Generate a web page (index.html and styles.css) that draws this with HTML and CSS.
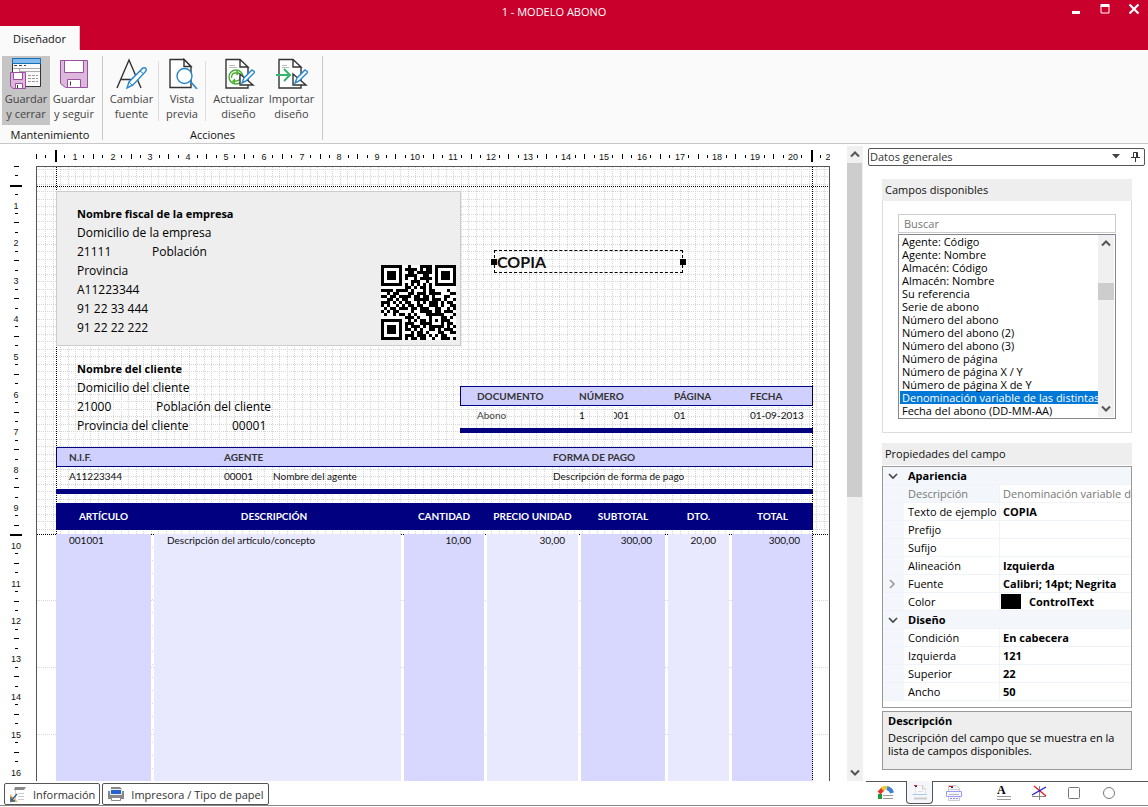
FILE: index.html
```html
<!DOCTYPE html>
<html lang="es">
<head>
<meta charset="utf-8">
<title>1 - MODELO ABONO</title>
<link rel="stylesheet" href="styles.css">
</head>
<body>
<div class="window">
  <header class="titlebar">
    <h1 class="title">1 - MODELO ABONO</h1>
    <div class="window-controls">
      <button class="window-button" type="button" aria-label="Minimizar"><svg width="12" height="12" viewBox="0 0 12 12"><path d="M2 9.500h8" stroke="#fff" stroke-width="3"/></svg></button>
      <button class="window-button" type="button" aria-label="Maximizar"><svg width="12" height="12" viewBox="0 0 12 12"><path d="M2 3h8v7h-8z" fill="none" stroke="#fff"/><path d="M1.500 2.500h9" stroke="#fff" stroke-width="3"/></svg></button>
      <button class="window-button" type="button" aria-label="Cerrar"><svg width="12" height="12" viewBox="0 0 12 12"><path d="M1.500 1.500l9 9M10.500 1.500l-9 9" stroke="#fff" stroke-width="2.200"/></svg></button>
    </div>
  </header>
  <nav class="tabs"><button class="tab" type="button">Diseñador</button></nav>

  <section class="ribbon">
    <div class="ribbon-group">
      <div class="ribbon-tools">
        <button class="tool tool-active" type="button">
          <svg width="32" height="32" viewBox="0 0 32 32"><path d="M2.500 1.500h28v28h-28z" fill="#fafafa" stroke="#333"/><path d="M2.500 1.500h28v5h-28z" fill="#83bcec" stroke="#1570b8"/><path d="M4 8.500h3m2 0h3m2 0h2" stroke="#444"/><path d="M3 11.500h27M9.500 11v6M9 14.500h21" stroke="#aaa"/><path d="M18 18.500h10M18 21.500h10M18 24.500h10" stroke="#999" stroke-dasharray="3 1"/><path d="M.500 15.500h15v16H3l-2.500-2.500z" fill="#dcb8dc" stroke="#9b4f9f"/><path d="M3.500 15.500h9v7h-9z" fill="#fff" stroke="#9b4f9f"/><path d="M5.500 26.500h7v5h-7z" fill="#fff" stroke="#9b4f9f"/><path d="M7.500 28v3" stroke="#333"/></svg>
          <span>Guardar<br>y cerrar</span></button>
        <button class="tool" type="button">
          <svg width="32" height="32" viewBox="0 0 32 32"><path d="M2.500 3.500h27v27h-22l-5-4z" fill="#dcb8dc" stroke="#9b4f9f"/><path d="M6.500 3.500h19v12h-19zM9.500 22.500h13v8h-13z" fill="#fff" stroke="#9b4f9f"/><path d="M12.500 24.500v4" stroke="#333"/></svg>
          <span>Guardar<br>y seguir</span></button>
      </div>
      <div class="ribbon-label">Mantenimiento</div>
    </div>
    <div class="ribbon-group ribbon-actions">
      <div class="ribbon-tools">
        <button class="tool tool-wide" type="button">
          <svg width="32" height="32" viewBox="0 0 32 32"><path d="M1 31l12-28 12 28M5 22.500h16" fill="none" stroke="#333" stroke-width="1.400"/><path d="M11 31l2-6 14-14q4-1 3 3L17 28z" fill="#fff" stroke="#2587cf" stroke-width="1.400"/><path d="M13 25l3 3M24 14l4 3" stroke="#2587cf"/></svg>
          <span>Cambiar<br>fuente</span></button>
        <i class="tool-divider"></i>
        <button class="tool tool-narrow" type="button">
          <svg width="32" height="32" viewBox="0 0 32 32"><path d="M4 2.500h14l7 7v21H4z" fill="#fff" stroke="#333" stroke-width="1.400"/><path d="M18 2.500v7h7z" fill="#fff" stroke="#333" stroke-width="1.400"/><circle cx="18.500" cy="19" r="7.500" fill="#fff" stroke="#2587cf" stroke-width="1.400"/><path d="M24 24l7 8" stroke="#2587cf" stroke-width="1.600"/></svg>
          <span>Vista<br>previa</span></button>
        <i class="tool-divider"></i>
        <div class="tool-pair">
        <button class="tool tool-wide" type="button">
          <svg width="32" height="32" viewBox="0 0 32 32"><path d="M25 10v21H3V2.500h14l8 7.500h-8V2.500" fill="#fff" stroke="#333" stroke-width="1.400"/><path d="M6 8.500h6M6 10.500h8" stroke="#bbb"/><g fill="none" stroke="#4aae32"><circle cx="13" cy="20" r="7" stroke-width="1.500"/><path d="M8.500 21q0-5 4-5h3l-2-2m2 2-2 2M17 19q1 5-4 5h-3l2-2m-2 2 2 2" stroke-width="1.300"/></g><path d="M17 17v11h13z" fill="#fff" stroke="#333" stroke-width="1.400"/><path d="M19 26l2-5 8-8 3 2-9 9z" fill="#fff" stroke="#2587cf" stroke-width="1.400"/></svg>
          <span>Actualizar<br>diseño</span></button>
        <button class="tool tool-wide" type="button">
          <svg width="32" height="32" viewBox="0 0 32 32"><path d="M25 10v21H3V2.500h14l8 7.500h-8V2.500" fill="#fff" stroke="#333" stroke-width="1.400"/><path d="M6 8.500h5M6 10.500h7" stroke="#bbb"/><path d="M0 18h13M8 12l6 6-6 6" fill="none" stroke="#36b56c" stroke-width="2"/><path d="M17 17v11h13z" fill="#fff" stroke="#333" stroke-width="1.400"/><path d="M19 26l2-5 8-8 3 2-9 9z" fill="#fff" stroke="#2587cf" stroke-width="1.400"/></svg>
          <span>Importar<br>diseño</span></button>
        </div>
      </div>
      <div class="ribbon-label">Acciones</div>
    </div>
  </section>

  <main class="workspace">
    <section class="designer">
      <svg class="ruler ruler-top" id="ruler-top"></svg>
      <svg class="ruler ruler-left" id="ruler-left"></svg>
      <div class="page" id="page">
        <svg class="page-grid" id="page-grid"></svg>

        <div class="company">
          <strong>Nombre fiscal de la empresa</strong>
          <span>Domicilio de la empresa</span>
          <span class="pair"><span class="postcode">21111</span><span>Población</span></span>
          <span>Provincia</span>
          <span>A11223344</span>
          <span>91 22 33 444</span>
          <span>91 22 22 222</span>
          <svg class="qr" id="qr" viewBox="0 0 25 25" shape-rendering="crispEdges" role="img" aria-label="Código QR"></svg>
        </div>

        <div class="customer">
          <strong>Nombre del cliente</strong>
          <span>Domicilio del cliente</span>
          <span class="pair"><span class="postcode-wide">21000</span><span>Población del cliente</span></span>
          <span class="pair"><span class="province">Provincia del cliente</span><span>00001</span></span>
        </div>

        <div class="selected-field">COPIA</div>

        <table class="info document">
          <colgroup><col class="w-type"><col class="w-series"><col class="w-number"><col class="w-page"><col></colgroup>
          <thead><tr><th>DOCUMENTO</th><th colspan="2">NÚMERO</th><th>PÁGINA</th><th>FECHA</th></tr></thead>
          <tbody><tr><td class="muted">Abono</td><td>1</td><td><span class="cut">001</span></td><td>01</td><td>01-09-2013</td></tr></tbody>
        </table>

        <table class="info payment">
          <colgroup><col class="w-nif"><col class="w-agent-code"><col class="w-agent-name"><col></colgroup>
          <thead><tr><th>N.I.F.</th><th colspan="2">AGENTE</th><th>FORMA DE PAGO</th></tr></thead>
          <tbody><tr><td>A11223344</td><td>00001</td><td>Nombre del agente</td><td>Descripción de forma de pago</td></tr></tbody>
        </table>

        <div class="lines">
          <div class="lines-head"><span>ARTÍCULO</span><span class="head-description">DESCRIPCIÓN</span><span>CANTIDAD</span><span>PRECIO UNIDAD</span><span>SUBTOTAL</span><span>DTO.</span><span>TOTAL</span></div>
          <div class="lines-body"><span class="text">001001</span><span class="text">Descripción del artículo/concepto</span><span>10,00</span><span>30,00</span><span>300,00</span><span>20,00</span><span>300,00</span></div>
        </div>
        <i class="guide guide-right"></i>
      </div>
      <div class="scrollbar main-scroll">
        <svg width="16" height="17" viewBox="0 0 16 17"><path d="M4 10.500l4-4 4 4" fill="none" stroke="#555" stroke-width="2"/></svg>
        <i class="main-thumb"></i>
        <svg class="scroll-end" width="16" height="17" viewBox="0 0 16 17"><path d="M4 6.500l4 4 4-4" fill="none" stroke="#555" stroke-width="2"/></svg>
      </div>
    </section>

    <aside class="side">
      <div class="side-content">
        <div class="pane-title"><span>Datos generales</span>
          <button class="pane-button" type="button" aria-label="Opciones"><svg width="8" height="5" viewBox="0 0 8 5"><path d="M0 0h8l-4 4.500z" fill="#444"/></svg></button>
          <button class="pane-button" type="button" aria-label="Fijar"><svg width="9" height="10" viewBox="0 0 9 10"><path d="M2.500 5.500v-5h4v5M5.500.500v5M0 5.500h9M4.500 6v4" fill="none" stroke="#333"/></svg></button>
        </div>
        <section class="box">
          <h2 class="box-title">Campos disponibles</h2>
          <div class="box-body">
            <input class="search" type="text" placeholder="Buscar" aria-label="Buscar">
            <div class="list">
              <ul class="list-items" role="listbox" aria-label="Campos disponibles">
                <li role="option">Agente: Código</li><li role="option">Agente: Nombre</li><li role="option">Almacén: Código</li><li role="option">Almacén: Nombre</li><li role="option">Su referencia</li><li role="option">Serie de abono</li><li role="option">Número del abono</li><li role="option">Número del abono (2)</li><li role="option">Número del abono (3)</li><li role="option">Número de página</li><li role="option">Número de página X / Y</li><li role="option">Número de página X de Y</li><li role="option" aria-selected="true" class="chosen">Denominación variable de las distintas</li><li role="option">Fecha del abono (DD-MM-AA)</li>
              </ul>
              <div class="scrollbar list-scroll">
                <svg width="16" height="17" viewBox="0 0 16 17"><path d="M4 10.500l4-4 4 4" fill="none" stroke="#555" stroke-width="2"/></svg>
                <i class="list-thumb"></i>
                <svg class="scroll-end" width="16" height="17" viewBox="0 0 16 17"><path d="M4 6.500l4 4 4-4" fill="none" stroke="#555" stroke-width="2"/></svg>
              </div>
            </div>
          </div>
        </section>
        <section class="box-plain">
          <h2 class="box-title">Propiedades del campo</h2>
          <div class="props-frame">
          <table class="props">
            <colgroup><col class="w-toggle"><col class="w-name"><col></colgroup>
            <tr class="category"><td><svg width="10" height="8" viewBox="0 0 10 8"><path d="M1 2l4 4 4-4" fill="none" stroke="#444" stroke-width="1.600"/></svg></td><th colspan="2">Apariencia</th></tr>
            <tr class="readonly"><td></td><th>Descripción</th><td>Denominación variable de</td></tr>
            <tr><td></td><th>Texto de ejemplo</th><td>COPIA</td></tr>
            <tr><td></td><th>Prefijo</th><td></td></tr>
            <tr><td></td><th>Sufijo</th><td></td></tr>
            <tr><td></td><th>Alineación</th><td>Izquierda</td></tr>
            <tr><td><svg width="8" height="10" viewBox="0 0 8 10"><path d="M2 1l4 4-4 4" fill="none" stroke="#999" stroke-width="1.600"/></svg></td><th>Fuente</th><td>Calibri; 14pt; Negrita</td></tr>
            <tr><td></td><th>Color</th><td><span class="color-value"><i class="swatch"></i>ControlText</span></td></tr>
            <tr class="category"><td><svg width="10" height="8" viewBox="0 0 10 8"><path d="M1 2l4 4 4-4" fill="none" stroke="#444" stroke-width="1.600"/></svg></td><th colspan="2">Diseño</th></tr>
            <tr><td></td><th>Condición</th><td>En cabecera</td></tr>
            <tr><td></td><th>Izquierda</th><td>121</td></tr>
            <tr><td></td><th>Superior</th><td>22</td></tr>
            <tr><td></td><th>Ancho</th><td>50</td></tr>
          </table>
          </div>
          <div class="help"><strong>Descripción</strong><p>Descripción del campo que se muestra en la lista de campos disponibles.</p></div>
        </section>
      </div>
    </aside>
  </main>

  <footer class="bottom">
    <div class="bottom-tabs">
      <button class="bottom-tab" type="button"><svg width="18" height="18" viewBox="0 0 18 18"><path d="M6 2h11l-2 3H5z" fill="#888"/><path d="M6.500 5v10" fill="none" stroke="#ccc"/><path d="M9 8.500h6M9 11.500h6M9 14.500h6" stroke="#ccc"/><path d="M1 9v8h8z" fill="#efb651"/><path d="M8 9l-6 7v-4m0 4h4" fill="none" stroke="#285b9b" stroke-width="1.300"/></svg>Información</button>
      <button class="bottom-tab" type="button"><svg width="18" height="18" viewBox="0 0 18 18"><path d="M4 2h9l2 2v3H4z" fill="#888"/><path d="M1 6h16v8H1z" fill="#888"/><path d="M3.500 4.500h11v5h-11z" fill="#2563d0" stroke="#eee"/><path d="M4.500 12.500h9v3h-9z" fill="#fff" stroke="#888"/></svg>Impresora / Tipo de papel</button>
    </div>
    <div class="side-tabs">
      <button class="side-tab" type="button" aria-label="Datos generales"><svg width="18" height="16" viewBox="0 0 18 16"><path d="M3 14V9" stroke="#20983c" stroke-width="4"/><path d="M2 8l4-4" stroke="#e03b20" stroke-width="4"/><path d="M5 4q3-2 5-1" fill="none" stroke="#f1c832" stroke-width="4"/><path d="M10 3q4 1 5 5" fill="none" stroke="#3b83d8" stroke-width="4"/><path d="M6 10.500h10M6 13.500h10" stroke="#999"/></svg></button>
      <button class="side-tab side-tab-active" type="button" aria-label="Cabecera"><svg width="18" height="18" viewBox="0 0 18 18"><path d="M4.500 12V2.500h7l3 3V12" fill="#f9f9f9" stroke="#e4e4e4"/><path d="M11.500 2v4h3" fill="none" stroke="#ccc"/><path d="M3 2.500h3" stroke="#d22"/><path d="M4 3.500h2" stroke="#22b"/><path d="M7 8.500h5" stroke="#ddd"/><path d="M1.500 11.500h14" stroke="#a5c9ef"/><path d="M3 15.500h13" stroke="#ccc" stroke-width="2"/></svg></button>
      <button class="side-tab" type="button" aria-label="Líneas"><svg width="18" height="18" viewBox="0 0 18 18"><path d="M3.500 16.500v-15h8l3 3v12z" fill="#f9f9f9" stroke="#ccc"/><path d="M4 2.500h4" stroke="#d22"/><path d="M6 3.500h2" stroke="#22b"/><path d="M4 5.500h10" stroke="#ccc"/><path d="M1.500 7.500h15v5h-15z" fill="#f6f6ff" stroke="#9b9bf5"/><path d="M4 10.500h10" stroke="#bbb"/><path d="M5 14.500h9" stroke="#88e" stroke-dasharray="2 1"/></svg></button>
      <i></i>
      <button class="side-tab" type="button" aria-label="Texto"><svg width="18" height="18" viewBox="0 0 18 18"><text x="2" y="10" class="letter-icon">A</text><path d="M2 12.500h14M2 15.500h14" stroke="#999"/></svg></button>
      <button class="side-tab" type="button" aria-label="Línea"><svg width="18" height="18" viewBox="0 0 18 18"><path d="M9.500 2v14M2 12.500h14" stroke="#888"/><path d="M4 2l12 10" stroke="#d22" stroke-width="1.400"/><path d="M16 3L2 11" stroke="#22d" stroke-width="1.400"/></svg></button>
      <button class="side-tab" type="button" aria-label="Rectángulo"><svg width="18" height="18" viewBox="0 0 18 18"><rect x="3.500" y="3.500" width="11" height="11" rx="1" fill="none" stroke="#777"/></svg></button>
      <button class="side-tab" type="button" aria-label="Elipse"><svg width="18" height="18" viewBox="0 0 18 18"><circle cx="9" cy="9" r="5.500" fill="none" stroke="#777"/></svg></button>
    </div>
  </footer>
</div>
<script src="script.js"></script>
</body>
</html>
```

FILE: styles.css
```css
* { box-sizing: border-box; }
body, h1, h2, p, ul { margin: 0; padding: 0; }
body { font-family: "Open Sans", "Noto Sans", sans-serif; font-size: 11px; color: #111; background: #fff; }
button { font: inherit; color: inherit; background: none; border: 0; padding: 0; margin: 0; }
svg { display: block; flex: none; }
h1, h2 { font-weight: 400; }

.window { display: flex; flex-direction: column; height: 100vh; overflow: hidden; }

.titlebar { display: grid; grid-template-columns: 1fr auto 1fr; align-items: center; height: 26px; flex: none; background: #c9002b; color: #fff; padding: 0 8px 3px 0; }
.title { grid-column: 2; font-size: 11px; margin-right: 32px; }
.window-controls { display: flex; justify-content: flex-end; gap: 17px; padding-bottom: 6px; }
.tabs { display: flex; flex: none; height: 24px; background: #c9002b; }
.tab { width: 80px; background: #fafafa; border-right: 1px solid #ccc; }

.ribbon { display: flex; flex: none; height: 94px; background: #fafafa; border-bottom: 1px solid #c8c8c8; padding: 6px 2px 3px; }
.ribbon-group { display: flex; flex-direction: column; border-right: 1px solid #c8c8c8; padding-right: 4px; }
.ribbon-actions { padding: 0 2px; }
.ribbon-tools { display: flex; }
.tool { display: flex; flex-direction: column; align-items: center; width: 48px; height: 69px; line-height: 15px; color: #444; padding-top: 1px; }
.tool svg { margin-bottom: 2px; }
.tool-wide { width: 53px; }
.tool-narrow { width: 46px; }
.tool-pair { display: flex; padding: 0 2px 0 6px; }
.tool-active { background: #c5c5c5; }
.tool-divider { width: 1px; height: 60px; background: #ddd; margin-top: 5px; }
.ribbon-label { text-align: center; line-height: 15px; margin-top: 2px; }

.workspace { display: flex; flex: 1; min-height: 0; }
.designer { flex: 1; min-width: 0; display: grid; grid-template: 22px minmax(0, 1fr) / 36px 794px 33px; justify-content: start; overflow: hidden; }
.ruler-top { grid-column: 1 / 3; width: 100%; height: 22px; }
.ruler-left { grid-column: 1; grid-row: 2; width: 36px; height: 100%; }
.ruler text { font: 9px "Liberation Sans", sans-serif; text-anchor: middle; fill: #111; }
.page { grid-column: 2; grid-row: 2; position: relative; overflow: hidden; border: 1px solid #555; border-bottom: 0; background: #fff; }
.page-grid { position: absolute; inset: 0; width: 100%; height: 100%; }
.main-scroll { grid-column: 3; grid-row: 1 / 3; margin: 2px 0 0 17px; }
.scrollbar { display: flex; flex-direction: column; background: #f0f0f0; }
.main-thumb { height: 334px; background: #cdcdcd; margin-right: 1px; }
.scroll-end { margin-top: auto; }

.company { position: absolute; left: 19px; top: 24px; width: 405px; height: 155px; background: #eee; border: 1px solid #ccc; padding: 12px 20px; }
.company, .customer { display: flex; flex-direction: column; font-size: 12px; line-height: 19px; color: #000; }
.company strong, .customer strong { font-size: 11px; }
.customer { position: absolute; left: 40px; top: 192px; }
.pair { display: flex; }
.postcode { width: 75px; }
.postcode-wide { width: 79px; }
.province { width: 155px; }
.qr { position: absolute; right: 4px; bottom: 5px; width: 75px; height: 75px; background: #fff; }
.selected-field { position: absolute; left: 457px; top: 83px; width: 189px; height: 23px; border: 1px dashed #000; font: bold 16px/21px Lato, sans-serif; padding-left: 2px; }
.selected-field::before, .selected-field::after { content: ""; position: absolute; top: 8px; width: 6px; height: 6px; background: #000; }
.selected-field::before { left: -4px; }
.selected-field::after { right: -4px; }

.info { position: absolute; table-layout: fixed; border-collapse: separate; border-spacing: 0; font: 10px/18px Lato, sans-serif; border-bottom: 5px solid #000080; }
.info th, .info td { padding: 0; text-align: left; white-space: nowrap; }
.info thead { background: #d0d0ff; }
.info th { color: #333; border: solid #000080; border-width: 1px 0; }
.info th:first-child { border-left-width: 1px; }
.info th:last-child { border-right-width: 1px; }
.info td { height: 22px; padding-bottom: 4px; }
.info .muted { color: #444; }
.document { left: 423px; top: 219px; width: 353px; }
.document th:first-child { padding-left: 16px; }
.document td:first-child { padding-left: 17px; }
.w-type { width: 119px; }
.w-series { width: 35px; }
.w-number { width: 60px; }
.w-page { width: 76px; }
.cut { display: block; overflow: hidden; direction: rtl; width: 15px; }
.payment { left: 19px; top: 280px; width: 757px; }
.payment th:first-child { padding-left: 12px; }
.payment td:first-child { padding-left: 13px; }
.w-nif { width: 168px; }
.w-agent-code { width: 49px; }
.w-agent-name { width: 280px; }

.lines { position: absolute; left: 19px; top: 336px; bottom: 0; width: 757px; display: flex; flex-direction: column; font: 10px/13px Lato, sans-serif; }
.lines-head, .lines-body { display: grid; grid-template-columns: 95px 247px 80px 91px 84px 61px 1fr; column-gap: 3px; }
.lines-head { height: 27px; background: #000080; color: #fff; font-weight: bold; align-items: center; text-align: center; }
.lines-head .head-description { padding-right: 7px; }
.lines-body { flex: 1; margin-top: 4px; text-align: right; }
.lines-body span { background: #e8e8ff; padding-right: 13px; }
.lines-body span:nth-child(odd) { background: #d8d8ff; }
.lines-body .text { text-align: left; padding-left: 13px; }
.guide { position: absolute; top: 0; bottom: 0; width: 1px; background: repeating-linear-gradient(#000 0 1px, transparent 1px 2px); }
.guide-right { right: 16px; }

.side { flex: none; width: 282px; padding: 4px 3px 0 2px; overflow: hidden; }
.pane-title { display: flex; align-items: center; height: 18px; line-height: 15px; border: 1px solid #555; border-radius: 2px; padding: 0 4px 1px 1px; color: #333; gap: 11px; }
.pane-title span { flex: 1; }
.box, .box-plain { margin: 13px 13px 0 14px; }
.box-plain { margin-top: 10px; }
.box-title { height: 22px; line-height: 22px; background: #eee; font-size: 11px; padding-left: 3px; }
.box-body { border: 1px solid #ddd; border-top: 0; padding: 13px 15px 13px; }
.search { display: block; width: 100%; height: 19px; border: 1px solid #ccc; padding: 0 5px; font: inherit; margin-bottom: 1px; outline: 0; }
.search::placeholder { color: #777; }
.list { display: flex; height: 185px; border: 1px solid #828790; padding: 0 1px 1px; }
.list-items { flex: 1; min-width: 0; list-style: none; overflow: hidden; color: #000; }
.list-items li { height: 13px; line-height: 13px; padding-left: 2px; white-space: nowrap; }
.list-items .chosen { background: #0078d7; color: #fff; }
.list-scroll { width: 16px; }
.list-thumb { height: 17px; margin-top: 31px; background: #cdcdcd; }

.props-frame { height: 242px; border: 1px solid #999; overflow: hidden; margin-top: 1px; }
.props { width: 100%; table-layout: fixed; border-collapse: separate; border-spacing: 0; color: #000; }
.w-toggle { width: 21px; }
.w-name { width: 95px; }
.props td, .props th { height: 18px; line-height: 17px; padding: 0 0 0 4px; text-align: left; font-weight: 400; white-space: nowrap; overflow: hidden; border-bottom: 1px solid #f0f4fa; }
.props td:first-child { padding: 0 0 0 5px; background: #f3f7fc; }
.props td:last-child { font-weight: bold; border-left: 1px solid #f0f4fa; padding-left: 3px; }
.props .category th { font-weight: bold; background: #f3f7fc; }
.props .readonly th { background: #f3f7fc; color: #777; }
.props .readonly td:last-child { color: #777; font-weight: 400; }
.color-value { display: flex; align-items: center; gap: 8px; }
.swatch { width: 20px; height: 15px; background: #000; margin-left: -2px; }
.help { height: 59px; margin-top: 3px; border: 1px solid #999; background: #eee; padding: 1px 5px; line-height: 13px; color: #000; }
.help strong { display: block; line-height: 16px; margin-bottom: 2px; }

.bottom { display: flex; flex: none; height: 25px; margin-bottom: 1px; border-bottom: 1px solid #888; }
.bottom-tabs { flex: 1; display: flex; gap: 2px; padding: 2px 4px 0; }
.bottom-tab { display: flex; align-items: center; gap: 6px; height: 22px; border: 1px solid #555; border-radius: 2px; padding: 0 4px; color: #333; }
.side-tabs { width: 282px; flex: none; display: grid; grid-template-columns: 40px 27px 42px 11px repeat(4, 35px); border-top: 1px solid #555; }
.side-tab { display: flex; justify-content: center; align-items: center; height: 22px; }
.side-tab-active { border: 1px solid #555; border-top: 0; border-radius: 0 0 4px 4px; background: #f5f5fc; margin-top: -1px; height: 23px; }
.letter-icon { font: bold 12px "Liberation Serif", serif; }
```

FILE: script.js
```js
const NS = "http://www.w3.org/2000/svg";
const CM = 37.8;

function add(parent, tag, attrs, text) {
  const el = document.createElementNS(NS, tag);
  for (const key in attrs) el.setAttribute(key, attrs[key]);
  if (text !== undefined) el.textContent = text;
  parent.appendChild(el);
}

function drawRuler(svg, vertical, start, count, thick) {
  for (let i = 0; i <= count * 4; i++) {
    const n = i / 4;
    const p = Math.floor(start + n * CM);
    const bold = thick.includes(n);
    if (Number.isInteger(n) && n > 0 && !bold) {
      const label = vertical || n < count ? n : "2";
      add(svg, "text", vertical ? { x: 16, y: p + 5 } : { x: n < count ? p + 1 : p - 2, y: 16 }, label);
      continue;
    }
    const length = bold ? 12 : i % 2 ? 3 : 5;
    const size = bold ? 2 : 1;
    const center = vertical ? 16 : 12;
    const from = center - Math.floor(length / 2);
    add(svg, "rect", vertical
      ? { x: from, y: p, width: length, height: size }
      : { x: p, y: from, width: size, height: length });
  }
}
drawRuler(document.getElementById("ruler-top"), false, 36.5, 21, [0.5, 20.5]);
drawRuler(document.getElementById("ruler-left"), true, 0.3, 16, [0.5, 9.75]);

const grid = document.getElementById("page-grid");
function dotted(x1, y1, x2, y2, color, dash) {
  add(grid, "line", { x1, y1, x2, y2, stroke: color, "stroke-dasharray": dash, "shape-rendering": "crispEdges" });
}
const gridBottom = 367;
for (let x = 8; x < 792; x += 7.56) {
  const p = Math.round(x) + 0.5;
  dotted(p, 0, p, gridBottom, "#d6d6d6", "1 1");
}
for (let y = 1.5; y < gridBottom; y += 7.5) {
  const p = Math.round(y) + 0.5;
  dotted(0, p, 792, p, "#d6d6d6", "1 1");
}
for (const y of [433.5, 500.5, 567.5]) dotted(0, y, 792, y, "#d6d6d6", "1 1");
dotted(115.5, 380, 115.5, 614, "#d6d6d6", "1 12");
dotted(0, 19.5, 792, 19.5, "#000", "1 1");
dotted(0, gridBottom + 0.5, 792, gridBottom + 0.5, "#000", "1 1");
dotted(19.5, 0, 19.5, gridBottom, "#000", "1 1");

const modules = [
  "1111111001000111101111111",
  "1000001011110101101000001",
  "1011101001101111101011101",
  "1011101011110011001011101",
  "1011101010010111101011101",
  "1000001000111001001000001",
  "1111111010101010101111111",
  "0000000011010110100000000",
  "1111011110100010110000100",
  "0010110001101110111100011",
  "1101101111011011010001100",
  "0011010110011111011101001",
  "1110101011001010111010110",
  "1010010101101100111010011",
  "0101101110110111001100101",
  "1010110000100111101101110",
  "0100101101010001111110001",
  "0000000011101000100011010",
  "1111111001010110101011100",
  "1000001011100111100010110",
  "1011101010111010111110101",
  "1011101011010100110101110",
  "1011101000101101000110011",
  "1000001011101110101011000",
  "1111111010110110010011101"
];
const qr = document.getElementById("qr");
modules.forEach((row, y) => {
  for (const run of row.matchAll(/1+/g)) {
    add(qr, "rect", { x: run.index, y, width: run[0].length, height: 1 });
  }
});
```
